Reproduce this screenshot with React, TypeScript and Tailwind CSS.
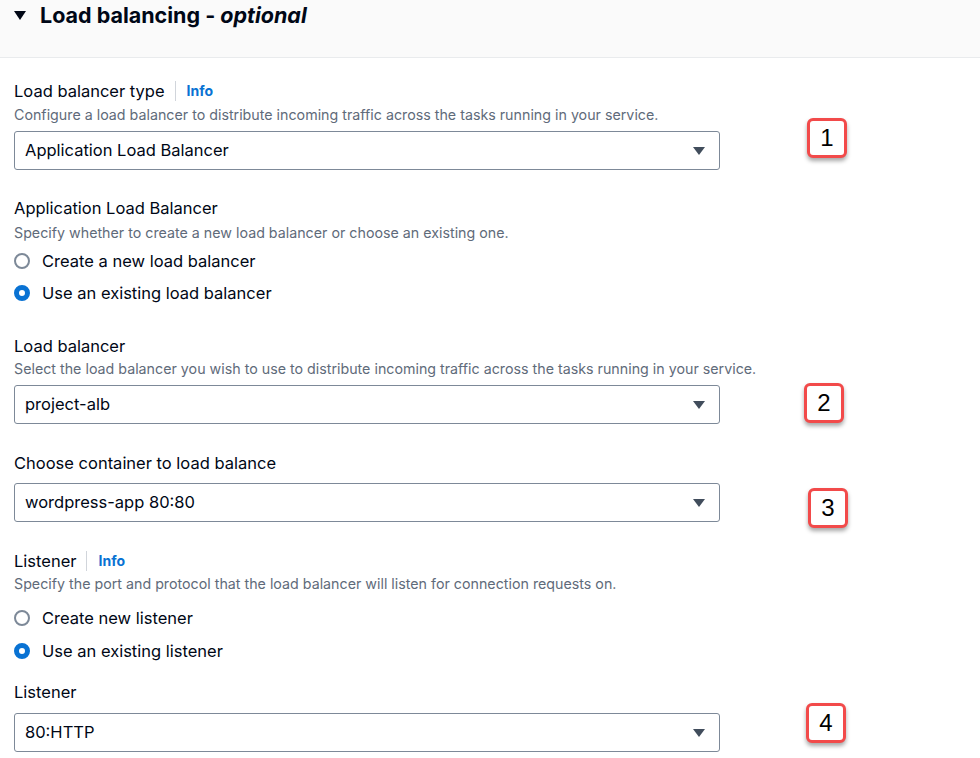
const font = "font-['Inter',sans-serif]";

const Caret = () => (
  <svg width="12" height="8" viewBox="0 0 12 8" className="shrink-0">
    <path d="M0 0 H12 L6 8 Z" fill="#414d5c" />
  </svg>
);

const Select = ({ value, className = "" }: { value: string; className?: string }) => (
  <div
    className={`flex h-[39px] w-[706px] items-center justify-between rounded-[3px] border border-[#7d8998] bg-white pl-[10px] pr-[14px] text-[16.5px] text-[#000716] ${className}`}
  >
    <span>{value}</span>
    <Caret />
  </div>
);

const Label = ({ text, info, className = "" }: { text: string; info?: boolean; className?: string }) => (
  <div className={`flex h-[22px] items-center text-[16.5px] leading-[22px] text-[#000716] ${className}`}>
    <span>{text}</span>
    {info && (
      <>
        <span className="ml-[10px] h-[20px] w-px bg-[#d1d5db]" />
        <span className="ml-[11px] text-[14px] font-bold text-[#0972d3]">Info</span>
      </>
    )}
  </div>
);

const Desc = ({ text, className = "" }: { text: string; className?: string }) => (
  <p className={`h-[20px] text-[14.25px] leading-[20px] text-[#5f6b7a] ${className}`}>{text}</p>
);

const Radio = ({ label, checked }: { label: string; checked?: boolean }) => (
  <div className="flex h-[22px] items-center gap-[12px] text-[16.5px] text-[#000716]">
    {checked ? (
      <span className="h-[16px] w-[16px] rounded-full border-[5px] border-[#0972d3] bg-white" />
    ) : (
      <span className="h-[16px] w-[16px] rounded-full border-2 border-[#7d8998] bg-white" />
    )}
    <span>{label}</span>
  </div>
);

// numbered callouts drawn over the screenshot
const Badge = ({ n, className }: { n: number; className: string }) => (
  <div
    className={`absolute flex h-[40px] w-[40px] items-center justify-center rounded-[6px] border-[3px] border-[#f24a4a] bg-white font-['Liberation_Sans',sans-serif] text-[24px] text-black shadow-[0_3px_4px_rgba(0,0,0,0.35)] ${className}`}
  >
    {n}
  </div>
);

export default function App() {
  return (
    <div className={`relative h-[758px] w-[980px] overflow-hidden bg-white ${font}`}>
      <div className="h-[58px] border-b border-[#e9ebed] bg-[#fafafa] pl-[14px] pt-[1px]">
        <div className="flex items-center gap-[14px] text-[21.5px] font-bold leading-[28px] text-[#000716]">
          <svg width="12" height="9" viewBox="0 0 12 9">
            <path d="M0 0 H12 L6 9 Z" fill="#000716" />
          </svg>
          <span>
            Load balancing - <i>optional</i>
          </span>
        </div>
      </div>

      <div className="px-[14px]">
        <Label text="Load balancer type" info className="mt-[22px]" />
        <Desc text="Configure a load balancer to distribute incoming traffic across the tasks running in your service." className="mt-[3px]" />
        <Select value="Application Load Balancer" className="mt-[6px]" />

        <Label text="Application Load Balancer" className="mt-[27px]" />
        <Desc text="Specify whether to create a new load balancer or choose an existing one." className="mt-[4px]" />
        <div className="mt-[7px] flex flex-col gap-[10px]">
          <Radio label="Create a new load balancer" />
          <Radio label="Use an existing load balancer" checked />
        </div>

        <Label text="Load balancer" className="mt-[31px]" />
        <Desc text="Select the load balancer you wish to use to distribute incoming traffic across the tasks running in your service." className="mt-[2px]" />
        <Select value="project-alb" className="mt-[6px]" />

        <Label text="Choose container to load balance" className="mt-[28px]" />
        <Select value="wordpress-app 80:80" className="mt-[9px]" />

        <Label text="Listener" info className="mt-[28px]" />
        <Desc text="Specify the port and protocol that the load balancer will listen for connection requests on." className="mt-[2px]" />
        <div className="mt-[13px] flex flex-col gap-[11px]">
          <Radio label="Create new listener" />
          <Radio label="Use an existing listener" checked />
        </div>

        <Label text="Listener" className="mt-[19px]" />
        <Select value="80:HTTP" className="mt-[10px]" />
      </div>

      <Badge n={1} className="left-[807px] top-[118px]" />
      <Badge n={2} className="left-[804px] top-[383px]" />
      <Badge n={3} className="left-[808px] top-[488px]" />
      <Badge n={4} className="left-[806px] top-[703px]" />
    </div>
  );
}
